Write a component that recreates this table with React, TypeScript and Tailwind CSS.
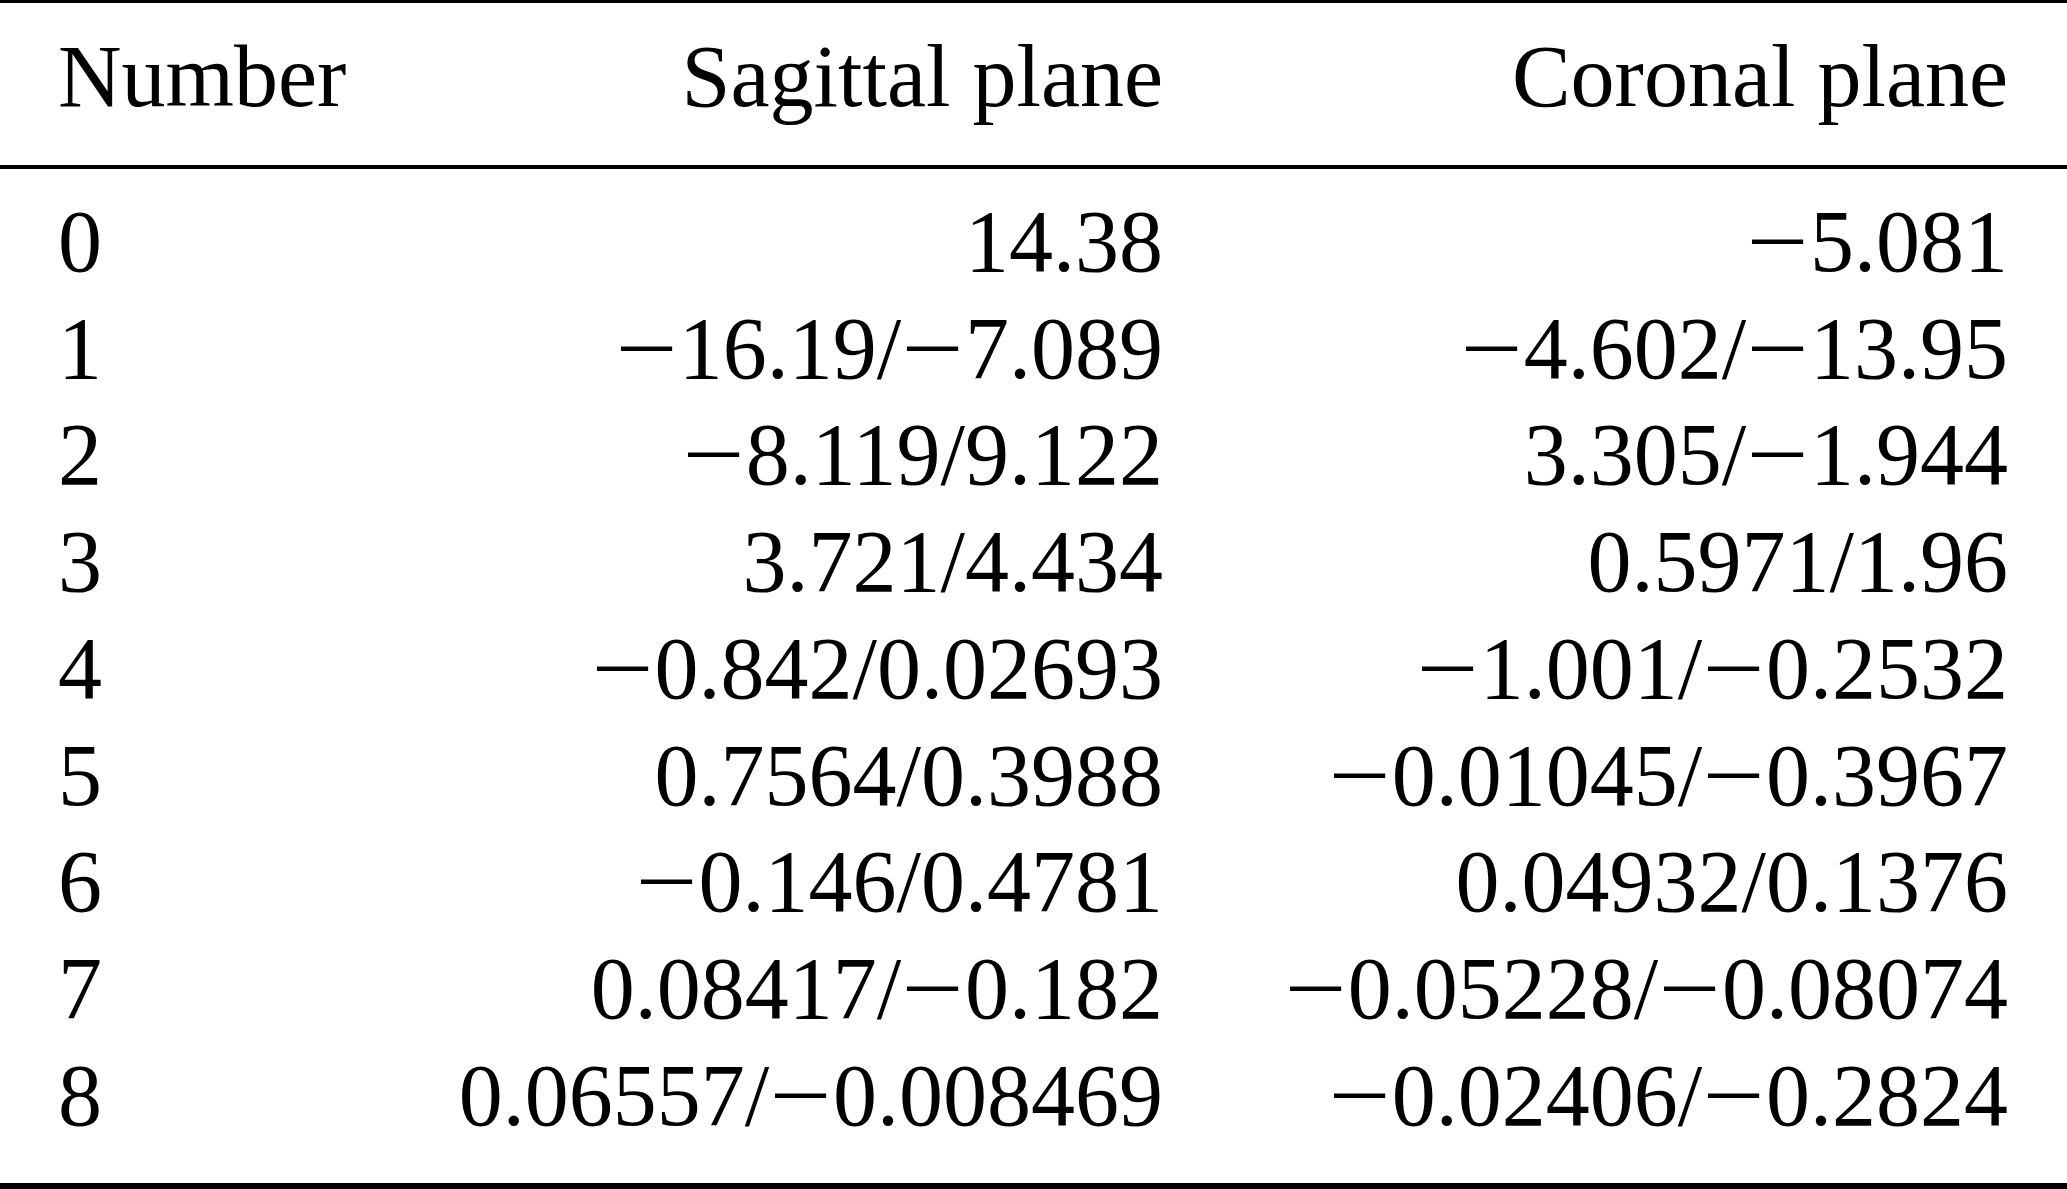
import React from "react";

const rows: [string, string, string][] = [
  ["0", "14.38", "\u22125.081"],
  ["1", "\u221216.19/\u22127.089", "\u22124.602/\u221213.95"],
  ["2", "\u22128.119/9.122", "3.305/\u22121.944"],
  ["3", "3.721/4.434", "0.5971/1.96"],
  ["4", "\u22120.842/0.02693", "\u22121.001/\u22120.2532"],
  ["5", "0.7564/0.3988", "\u22120.01045/\u22120.3967"],
  ["6", "\u22120.146/0.4781", "0.04932/0.1376"],
  ["7", "0.08417/\u22120.182", "\u22120.05228/\u22120.08074"],
  ["8", "0.06557/\u22120.008469", "\u22120.02406/\u22120.2824"],
];

function Num({ v }: { v: string }) {
  const parts = v.split("\u2212");
  return (
    <>
      {parts.map((p, i) => (
        <React.Fragment key={i}>
          {i > 0 && (
            <span className="inline-block w-[0.725em] text-center scale-x-125">{"\u2212"}</span>
          )}
          {p}
        </React.Fragment>
      ))}
    </>
  );
}

export default function App() {
  return (
    <div className="w-[2067px] h-[1189px] bg-white text-black font-['Liberation_Serif',serif] text-[88px] leading-[106.75px] flex flex-col overflow-hidden">
      <div className="h-[3px] bg-black shrink-0" />
      <div className="pt-[21px] pb-[34px] pl-[58px] pr-[59px] grid grid-cols-[300px_805px_845px]">
        <div className="whitespace-nowrap">Number</div>
        <div className="text-right whitespace-nowrap">Sagittal plane</div>
        <div className="text-right whitespace-nowrap">Coronal plane</div>
      </div>
      <div className="h-[4px] bg-black shrink-0" />
      <div className="pt-[20px] pb-[33px] pl-[58px] pr-[59px] grid grid-cols-[300px_805px_845px]">
        {rows.map((r) => (
          <React.Fragment key={r[0]}>
            <div className="whitespace-nowrap">{r[0]}</div>
            <div className="text-right whitespace-nowrap">
              <Num v={r[1]} />
            </div>
            <div className="text-right whitespace-nowrap">
              <Num v={r[2]} />
            </div>
          </React.Fragment>
        ))}
      </div>
      <div className="h-[6px] bg-black shrink-0" />
    </div>
  );
}
